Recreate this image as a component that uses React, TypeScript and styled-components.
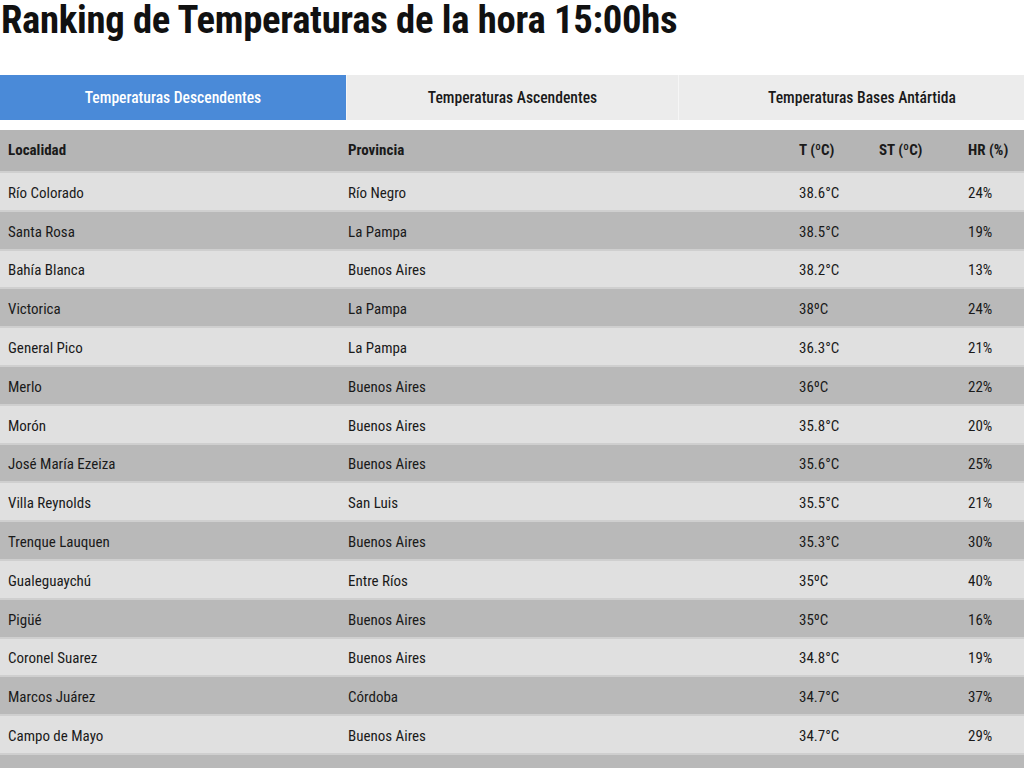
import styled, { createGlobalStyle } from 'styled-components';

const GlobalStyle = createGlobalStyle`
  body {
    margin: 0;
    background: #ffffff;
    font-family: Roboto, "Liberation Sans", sans-serif;
    font-stretch: 75%;
    color: #1a1a1a;
  }
`;

const Page = styled.div`
  width: 1024px;
  overflow: hidden;
`;

const Title = styled.h1`
  margin: 0;
  padding: 0 0 0 1px;
  height: 75px;
  font-size: 38.7px;
  line-height: 44px;
  font-weight: 700;
  color: #111;
  letter-spacing: -0.3px;
  margin-top: -2px;
  margin-bottom: 2px;
`;

const Tabs = styled.div`
  display: grid;
  grid-template-columns: 346px 332px 367px;
  height: 45px;
  margin-bottom: 10px;
`;

const Tab = styled.div<{ $active?: boolean }>`
  display: flex;
  align-items: center;
  justify-content: center;
  font-size: 15.6px;
  font-weight: 500;
  white-space: nowrap;
  background: ${p => (p.$active ? '#4a8ad8' : '#ececec')};
  color: ${p => (p.$active ? '#ffffff' : '#1a1a1a')};
  border-left: ${p => (p.$active ? 'none' : '1px solid #f6f6f6')};
`;

const Table = styled.div``;

const Row = styled.div<{ $shade: 'head' | 'light' | 'dark' }>`
  box-sizing: border-box;
  display: grid;
  grid-template-columns: 340px 451px 80px 89px 1fr;
  align-items: center;
  padding-left: 8px;
  padding-top: ${p => (p.$shade === 'head' ? '0' : '3px')};
  padding-bottom: ${p => (p.$shade === 'head' ? '2px' : '0')};
  background: ${p => (p.$shade === 'light' ? '#e0e0e0' : p.$shade === 'dark' ? '#b9b9b9' : '#b5b5b5')};
  border-bottom: 2px solid #cfcfcf;
  font-size: 15px;
  font-weight: ${p => (p.$shade === 'head' ? 700 : 400)};
  height: ${p => (p.$shade === 'head' ? '43px' : '38.8px')};
`;

const Cell = styled.div`
  white-space: nowrap;
`;

const rows = [
  ['Río Colorado', 'Río Negro', '38.6°C', '24%'],
  ['Santa Rosa', 'La Pampa', '38.5°C', '19%'],
  ['Bahía Blanca', 'Buenos Aires', '38.2°C', '13%'],
  ['Victorica', 'La Pampa', '38ºC', '24%'],
  ['General Pico', 'La Pampa', '36.3°C', '21%'],
  ['Merlo', 'Buenos Aires', '36ºC', '22%'],
  ['Morón', 'Buenos Aires', '35.8°C', '20%'],
  ['José María Ezeiza', 'Buenos Aires', '35.6°C', '25%'],
  ['Villa Reynolds', 'San Luis', '35.5°C', '21%'],
  ['Trenque Lauquen', 'Buenos Aires', '35.3°C', '30%'],
  ['Gualeguaychú', 'Entre Ríos', '35ºC', '40%'],
  ['Pigüé', 'Buenos Aires', '35ºC', '16%'],
  ['Coronel Suarez', 'Buenos Aires', '34.8°C', '19%'],
  ['Marcos Juárez', 'Córdoba', '34.7°C', '37%'],
  ['Campo de Mayo', 'Buenos Aires', '34.7°C', '29%'],
  ['Tandil', 'Buenos Aires', '34.5°C', '26%'],
];

export default function App() {
  return (
    <Page>
      <GlobalStyle />
      <Title>Ranking de Temperaturas de la hora 15:00hs</Title>
      <Tabs>
        <Tab $active>Temperaturas Descendentes</Tab>
        <Tab>Temperaturas Ascendentes</Tab>
        <Tab>Temperaturas Bases Antártida</Tab>
      </Tabs>
      <Table>
        <Row $shade="head">
          <Cell>Localidad</Cell>
          <Cell>Provincia</Cell>
          <Cell>T (ºC)</Cell>
          <Cell>ST (ºC)</Cell>
          <Cell>HR (%)</Cell>
        </Row>
        {rows.map((r, i) => (
          <Row key={r[0]} $shade={i % 2 === 0 ? 'light' : 'dark'}>
            <Cell>{r[0]}</Cell>
            <Cell>{r[1]}</Cell>
            <Cell>{r[2]}</Cell>
            <Cell></Cell>
            <Cell>{r[3]}</Cell>
          </Row>
        ))}
      </Table>
    </Page>
  );
}
